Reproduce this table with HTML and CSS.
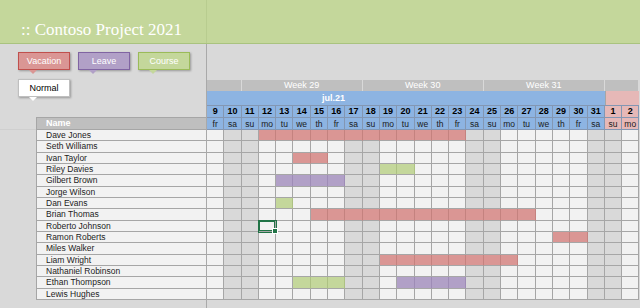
FILE: index.html
```html
<!DOCTYPE html>
<html lang="en">
<head>
<meta charset="utf-8">
<title>Contoso Project 2021</title>
<link rel="stylesheet" href="styles.css">
</head>
<body>
<header class="banner">
  <h1 class="banner-title">:: Contoso Project 2021</h1>
  <div class="banner-rest"></div>
</header>
<main class="sheet">
  <div class="legend">
    <div class="legend-row">
      <span class="tag vac">Vacation</span>
      <span class="tag lea">Leave</span>
      <span class="tag cou">Course</span>
    </div>
    <div class="legend-row">
      <span class="tag nor">Normal</span>
    </div>
  </div>
  <div class="topgap"></div>

  <div class="wk span2"></div>
  <div class="wk span7">Week 29</div>
  <div class="wk span7">Week 30</div>
  <div class="wk span7">Week 31</div>
  <div class="wk span2"></div>

  <div class="mon jul">jul.21</div>
  <div class="mon aug"></div>

  <div class="hdr nums">
    <span>9</span><span>10</span><span>11</span><span>12</span><span>13</span><span>14</span><span>15</span><span>16</span><span>17</span><span>18</span><span>19</span><span>20</span><span>21</span><span>22</span><span>23</span><span>24</span><span>25</span><span>26</span><span>27</span><span>28</span><span>29</span><span>30</span><span>31</span><span>1</span><span>2</span>
  </div>

  <div class="gut"></div>
  <div class="nh">Name</div>
  <div class="hdr names">
    <span>fr</span><span>sa</span><span>su</span><span>mo</span><span>tu</span><span>we</span><span>th</span><span>fr</span><span>sa</span><span>su</span><span>mo</span><span>tu</span><span>we</span><span>th</span><span>fr</span><span>sa</span><span>su</span><span>mo</span><span>tu</span><span>we</span><span>th</span><span>fr</span><span>sa</span><span>su</span><span>mo</span>
  </div>

  <div class="row"><div class="name">Dave Jones</div><i></i><i></i><i></i><i class="v"></i><i class="v"></i><i class="v"></i><i class="v"></i><i class="v"></i><i class="v"></i><i class="v"></i><i class="v"></i><i class="v"></i><i class="v"></i><i class="v"></i><i class="v"></i><i></i><i></i><i></i><i></i><i></i><i></i><i></i><i></i><i></i><i></i></div>
  <div class="row"><div class="name">Seth Williams</div><i></i><i></i><i></i><i></i><i></i><i></i><i></i><i></i><i></i><i></i><i></i><i></i><i></i><i></i><i></i><i></i><i></i><i></i><i></i><i></i><i></i><i></i><i></i><i></i><i></i></div>
  <div class="row"><div class="name">Ivan Taylor</div><i></i><i></i><i></i><i></i><i></i><i class="v"></i><i class="v"></i><i></i><i></i><i></i><i></i><i></i><i></i><i></i><i></i><i></i><i></i><i></i><i></i><i></i><i></i><i></i><i></i><i></i><i></i></div>
  <div class="row"><div class="name">Riley Davies</div><i></i><i></i><i></i><i></i><i></i><i></i><i></i><i></i><i></i><i></i><i class="k"></i><i class="k"></i><i></i><i></i><i></i><i></i><i></i><i></i><i></i><i></i><i></i><i></i><i></i><i></i><i></i></div>
  <div class="row"><div class="name">Gilbert Brown</div><i></i><i></i><i></i><i></i><i class="l"></i><i class="l"></i><i class="l"></i><i class="l"></i><i></i><i></i><i></i><i></i><i></i><i></i><i></i><i></i><i></i><i></i><i></i><i></i><i></i><i></i><i></i><i></i><i></i></div>
  <div class="row"><div class="name">Jorge Wilson</div><i></i><i></i><i></i><i></i><i></i><i></i><i></i><i></i><i></i><i></i><i></i><i></i><i></i><i></i><i></i><i></i><i></i><i></i><i></i><i></i><i></i><i></i><i></i><i></i><i></i></div>
  <div class="row"><div class="name">Dan Evans</div><i></i><i></i><i></i><i></i><i class="k"></i><i></i><i></i><i></i><i></i><i></i><i></i><i></i><i></i><i></i><i></i><i></i><i></i><i></i><i></i><i></i><i></i><i></i><i></i><i></i><i></i></div>
  <div class="row"><div class="name">Brian Thomas</div><i></i><i></i><i></i><i></i><i></i><i></i><i class="v"></i><i class="v"></i><i class="v"></i><i class="v"></i><i class="v"></i><i class="v"></i><i class="v"></i><i class="v"></i><i class="v"></i><i class="v"></i><i class="v"></i><i class="v"></i><i class="v"></i><i></i><i></i><i></i><i></i><i></i><i></i></div>
  <div class="row"><div class="name">Roberto Johnson</div><i></i><i></i><i></i><i class="sel"></i><i></i><i></i><i></i><i></i><i></i><i></i><i></i><i></i><i></i><i></i><i></i><i></i><i></i><i></i><i></i><i></i><i></i><i></i><i></i><i></i><i></i></div>
  <div class="row"><div class="name">Ramon Roberts</div><i></i><i></i><i></i><i></i><i></i><i></i><i></i><i></i><i></i><i></i><i></i><i></i><i></i><i></i><i></i><i></i><i></i><i></i><i></i><i></i><i class="v"></i><i class="v"></i><i></i><i></i><i></i></div>
  <div class="row"><div class="name">Miles Walker</div><i></i><i></i><i></i><i></i><i></i><i></i><i></i><i></i><i></i><i></i><i></i><i></i><i></i><i></i><i></i><i></i><i></i><i></i><i></i><i></i><i></i><i></i><i></i><i></i><i></i></div>
  <div class="row"><div class="name">Liam Wright</div><i></i><i></i><i></i><i></i><i></i><i></i><i></i><i></i><i></i><i></i><i class="v"></i><i class="v"></i><i class="v"></i><i class="v"></i><i class="v"></i><i class="v"></i><i class="v"></i><i class="v"></i><i></i><i></i><i></i><i></i><i></i><i></i><i></i></div>
  <div class="row"><div class="name">Nathaniel Robinson</div><i></i><i></i><i></i><i></i><i></i><i></i><i></i><i></i><i></i><i></i><i></i><i></i><i></i><i></i><i></i><i></i><i></i><i></i><i></i><i></i><i></i><i></i><i></i><i></i><i></i></div>
  <div class="row"><div class="name">Ethan Thompson</div><i></i><i></i><i></i><i></i><i></i><i class="k"></i><i class="k"></i><i class="k"></i><i></i><i></i><i></i><i class="l"></i><i class="l"></i><i class="l"></i><i class="l"></i><i></i><i></i><i></i><i></i><i></i><i></i><i></i><i></i><i></i><i></i></div>
  <div class="row"><div class="name">Lewis Hughes</div><i></i><i></i><i></i><i></i><i></i><i></i><i></i><i></i><i></i><i></i><i></i><i></i><i></i><i></i><i></i><i></i><i></i><i></i><i></i><i></i><i></i><i></i><i></i><i></i><i></i></div>
</main>
</body>
</html>
```
FILE: styles.css
```css
* { box-sizing: border-box; margin: 0; padding: 0; }

html, body {
  width: 640px;
  height: 308px;
  overflow: hidden;
}

body {
  background: #d9d9d9;
  font-family: "Liberation Sans", Arial, sans-serif;
  color: #1a1a1a;
}

/* ---------- banner ---------- */
.banner {
  height: 44px;
  display: flex;
  background: #c4d79b;
  border-bottom: 1px solid #a9c37f;
}

.banner-title {
  width: 207px;
  border-right: 1px solid #b8cc8f;
  padding: 21px 0 0 21px;
  color: #ffffff;
  font: normal 17px/17px "Liberation Serif", "Times New Roman", serif;
  white-space: nowrap;
}

.banner-rest { flex: 1; }

/* ---------- sheet grid ---------- */
.sheet {
  position: relative;
  height: 264px;
  display: grid;
  grid-template-columns: 36px 171px repeat(25, 17.3px);
  grid-template-rows: 36px 11px 14px 12px 13px repeat(15, 11.3333px);
}

.sheet::after {
  content: "";
  position: absolute;
  left: 206px;
  top: 0;
  bottom: 0;
  width: 1px;
  background: #a9a9a9;
}

/* legend */
.legend {
  grid-column: 1 / 3;
  grid-row: 1 / 5;
  padding: 8px 0 0 18px;
  display: flex;
  flex-direction: column;
  gap: 9px;
}

.legend-row {
  display: flex;
  gap: 8px;
}

.tag {
  position: relative;
  width: 52px;
  height: 18px;
  border: 1px solid;
  display: flex;
  align-items: center;
  justify-content: center;
  font-size: 9px;
  color: #ffffff;
  box-shadow: 1px 1px 2px rgba(0, 0, 0, 0.3);
}

.tag::after {
  content: "";
  position: absolute;
  left: 10px;
  bottom: -5px;
  width: 0;
  height: 0;
  border-left: 4px solid transparent;
  border-right: 4px solid transparent;
  border-top: 4px solid var(--fill);
}

.vac { --fill: #da9694; background: #da9694; border-color: #c0504d; }
.lea { --fill: #b1a0c7; background: #b1a0c7; border-color: #8064a2; }
.cou { --fill: #c4d79b; background: #c4d79b; border-color: #9bbb59; }
.nor { --fill: #ffffff; background: #ffffff; border-color: #bfbfbf; color: #000000; }

.topgap {
  grid-column: 3 / -1;
  grid-row: 1;
}

/* week row */
.wk {
  background: #bfbfbf;
  border-right: 1px solid #d9d9d9;
  color: #ffffff;
  font-size: 9px;
  line-height: 11px;
  text-align: center;
  white-space: nowrap;
  overflow: hidden;
}

.span2 { grid-column: span 2; }
.span7 { grid-column: span 7; }

/* month row */
.mon {
  color: #ffffff;
  font-weight: bold;
  font-size: 9px;
  line-height: 14px;
  white-space: nowrap;
}

.jul {
  grid-column: span 23;
  background: #8db4e2;
  padding-left: 115px;
}

.aug {
  grid-column: span 2;
  background: #e6b8b7;
  border-left: 1px solid #a6a6a6;
}

/* day header rows */
.hdr { display: contents; }

.hdr > span {
  background: #8db4e2;
  border-top: 1px solid #8397b3;
  border-right: 1px solid #8397b3;
  text-align: center;
  white-space: nowrap;
  overflow: hidden;
}

.hdr > span:nth-child(n+24) { background: #e6b8b7; }

.nums > span {
  font-weight: bold;
  font-size: 9px;
  line-height: 11px;
  color: #000000;
}

.names > span {
  font-size: 8.5px;
  line-height: 12px;
  color: #1a1a1a;
  border-bottom: 1px solid #8397b3;
}

.gut {
  grid-column: 1;
  border-bottom: 1px solid #cfcfcf;
}

.nh {
  grid-column: 2;
  background: #bfbfbf;
  border-top: 1px solid #a6a6a6;
  border-left: 1px solid #a6a6a6;
  border-right: 1px solid #a6a6a6;
  border-bottom: 1px solid #a6a6a6;
  color: #ffffff;
  font-weight: bold;
  font-size: 9px;
  line-height: 11px;
  padding-left: 9px;
}

/* body rows */
.row { display: contents; }

.name {
  grid-column: 2;
  background: #f2f2f2;
  border-left: 1px solid #a6a6a6;
  border-right: 1px solid #a6a6a6;
  border-bottom: 1px solid #a6a6a6;
  padding-left: 9px;
  font-size: 8.5px;
  line-height: 10.5px;
  color: #1c1c1c;
  white-space: nowrap;
}

.row > i {
  display: block;
  background: #f2f2f2;
  border-right: 1px solid #a6a6a6;
  border-bottom: 1px solid #a6a6a6;
}

.row > i:nth-child(7n+3),
.row > i:nth-child(7n+4) {
  background: #d9d9d9;
}

.row > i.v { background: #da9694; border-right-color: #c4827f; }
.row > i.l { background: #b1a0c7; border-right-color: #9e8cb6; }
.row > i.k { background: #c4d79b; border-right-color: #adc183; }

.row > i.sel {
  position: relative;
  z-index: 1;
  box-shadow: 0 0 0 1px #217346, inset 0 0 0 1px #217346;
}

.row > i.sel::after {
  content: "";
  position: absolute;
  right: -3px;
  bottom: -3px;
  width: 4px;
  height: 4px;
  background: #217346;
  border: 1px solid #ffffff;
}
```
